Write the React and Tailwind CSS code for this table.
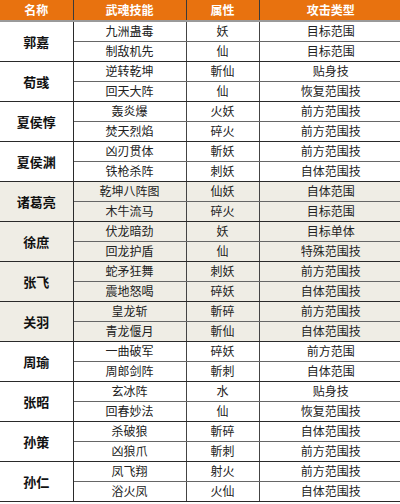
const groups = [
  { name: '郭嘉', rows: [['九洲蛊毒', '妖', '目标范围'], ['制敌机先', '仙', '目标范围']] },
  { name: '荀彧', rows: [['逆转乾坤', '斬仙', '贴身技'], ['回天大阵', '仙', '恢复范围技']] },
  { name: '夏侯惇', rows: [['轰炎爆', '火妖', '前方范围技'], ['焚天烈焰', '碎火', '前方范围技']] },
  { name: '夏侯渊', rows: [['凶刃贯体', '斬妖', '前方范围技'], ['铁枪杀阵', '刺妖', '自体范围技']] },
  { name: '诸葛亮', tan: true, rows: [['乾坤八阵图', '仙妖', '自体范围'], ['木牛流马', '碎火', '目标范围']] },
  { name: '徐庶', tan: true, rows: [['伏龙暗劲', '妖', '目标单体'], ['回龙护盾', '仙', '特殊范围技']] },
  { name: '张飞', tan: true, rows: [['蛇矛狂舞', '刺妖', '前方范围技'], ['震地怒喝', '碎妖', '自体范围技']] },
  { name: '关羽', tan: true, rows: [['皇龙斩', '斬碎', '前方范围技'], ['青龙偃月', '斬仙', '自体范围技']] },
  { name: '周瑜', rows: [['一曲破军', '碎妖', '前方范围'], ['周郎剑阵', '斬刺', '自体范围']] },
  { name: '张昭', rows: [['玄冰阵', '水', '贴身技'], ['回春妙法', '仙', '恢复范围技']] },
  { name: '孙策', rows: [['杀破狼', '斬碎', '自体范围技'], ['凶狼爪', '斬刺', '前方范围技']] },
  { name: '孙仁', rows: [['凤飞翔', '射火', '前方范围技'], ['浴火凤', '火仙', '自体范围技']] },
];

const font = { fontFamily: '"Noto Sans CJK SC", "Liberation Sans", sans-serif' };

export default function App() {
  return (
    <div className="w-[400px] h-[504px] overflow-hidden bg-white" style={font}>
      <table className="w-[402px] border-collapse table-fixed text-[12px] leading-none text-[#222]">
        <colgroup>
          <col className="w-[73px]" />
          <col className="w-[113px]" />
          <col className="w-[73px]" />
          <col className="w-[143px]" />
        </colgroup>
        <thead>
          <tr className="h-[21px] bg-[#e8720f] text-white font-bold">
            <th className="border-r border-[#3a3a3a] border-b-2 border-b-[#9a9a9a]">名称</th>
            <th className="border-r border-[#3a3a3a] border-b-2 border-b-[#9a9a9a]">武魂技能</th>
            <th className="border-r border-[#3a3a3a] border-b-2 border-b-[#9a9a9a]">属性</th>
            <th className="border-b-2 border-b-[#9a9a9a]">攻击类型</th>
          </tr>
        </thead>
        <tbody>
          {groups.map(g =>
            g.rows.map((r, i) => (
              <tr
                key={g.name + i}
                className={`h-[20px] ${g.tan ? 'bg-[#efede5]' : 'bg-white'}`}
              >
                {i === 0 && (
                  <td
                    rowSpan={2}
                    className="border border-[#2a2a2a] border-l-0 text-center font-bold text-[13px] text-[#111]"
                  >
                    {g.name}
                  </td>
                )}
                <td className={`border-r border-[#444] text-center border-b ${i === 1 ? 'border-b-[#2a2a2a]' : 'border-b-[#666]'}`}>{r[0]}</td>
                <td className={`border-r border-[#444] text-center border-b ${i === 1 ? 'border-b-[#2a2a2a]' : 'border-b-[#666]'}`}>{r[1]}</td>
                <td className={`text-center border-b ${i === 1 ? 'border-b-[#2a2a2a]' : 'border-b-[#666]'}`}>{r[2]}</td>
              </tr>
            ))
          )}
        </tbody>
      </table>
    </div>
  );
}
